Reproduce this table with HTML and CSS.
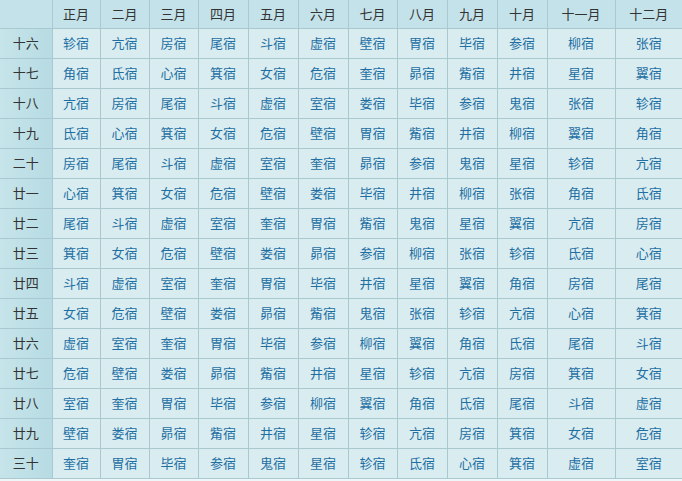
FILE: index.html
```html
<!DOCTYPE html>
<html lang="zh-CN">
<head>
<meta charset="utf-8">
<title>二十八宿</title>
<link rel="stylesheet" href="styles.css">
</head>
<body>
<table class="xiu">
<colgroup>
<col class="c-day"><col class="c48"><col class="c49"><col class="c49"><col class="c50"><col class="c50"><col class="c50"><col class="c49"><col class="c50"><col class="c50"><col class="c50"><col class="c68"><col class="c67">
</colgroup>
<thead>
<tr class="head"><th class="corner"></th><th>正月</th><th>二月</th><th>三月</th><th>四月</th><th>五月</th><th>六月</th><th>七月</th><th>八月</th><th>九月</th><th>十月</th><th>十一月</th><th>十二月</th></tr>
</thead>
<tbody>
<tr><th>十六</th><td>轸宿</td><td>亢宿</td><td>房宿</td><td>尾宿</td><td>斗宿</td><td>虚宿</td><td>壁宿</td><td>胃宿</td><td>毕宿</td><td>参宿</td><td>柳宿</td><td>张宿</td></tr>
<tr><th>十七</th><td>角宿</td><td>氐宿</td><td>心宿</td><td>箕宿</td><td>女宿</td><td>危宿</td><td>奎宿</td><td>昴宿</td><td>觜宿</td><td>井宿</td><td>星宿</td><td>翼宿</td></tr>
<tr><th>十八</th><td>亢宿</td><td>房宿</td><td>尾宿</td><td>斗宿</td><td>虚宿</td><td>室宿</td><td>娄宿</td><td>毕宿</td><td>参宿</td><td>鬼宿</td><td>张宿</td><td>轸宿</td></tr>
<tr><th>十九</th><td>氐宿</td><td>心宿</td><td>箕宿</td><td>女宿</td><td>危宿</td><td>壁宿</td><td>胃宿</td><td>觜宿</td><td>井宿</td><td>柳宿</td><td>翼宿</td><td>角宿</td></tr>
<tr><th>二十</th><td>房宿</td><td>尾宿</td><td>斗宿</td><td>虚宿</td><td>室宿</td><td>奎宿</td><td>昴宿</td><td>参宿</td><td>鬼宿</td><td>星宿</td><td>轸宿</td><td>亢宿</td></tr>
<tr><th>廿一</th><td>心宿</td><td>箕宿</td><td>女宿</td><td>危宿</td><td>壁宿</td><td>娄宿</td><td>毕宿</td><td>井宿</td><td>柳宿</td><td>张宿</td><td>角宿</td><td>氐宿</td></tr>
<tr><th>廿二</th><td>尾宿</td><td>斗宿</td><td>虚宿</td><td>室宿</td><td>奎宿</td><td>胃宿</td><td>觜宿</td><td>鬼宿</td><td>星宿</td><td>翼宿</td><td>亢宿</td><td>房宿</td></tr>
<tr><th>廿三</th><td>箕宿</td><td>女宿</td><td>危宿</td><td>壁宿</td><td>娄宿</td><td>昴宿</td><td>参宿</td><td>柳宿</td><td>张宿</td><td>轸宿</td><td>氐宿</td><td>心宿</td></tr>
<tr><th>廿四</th><td>斗宿</td><td>虚宿</td><td>室宿</td><td>奎宿</td><td>胃宿</td><td>毕宿</td><td>井宿</td><td>星宿</td><td>翼宿</td><td>角宿</td><td>房宿</td><td>尾宿</td></tr>
<tr><th>廿五</th><td>女宿</td><td>危宿</td><td>壁宿</td><td>娄宿</td><td>昴宿</td><td>觜宿</td><td>鬼宿</td><td>张宿</td><td>轸宿</td><td>亢宿</td><td>心宿</td><td>箕宿</td></tr>
<tr><th>廿六</th><td>虚宿</td><td>室宿</td><td>奎宿</td><td>胃宿</td><td>毕宿</td><td>参宿</td><td>柳宿</td><td>翼宿</td><td>角宿</td><td>氐宿</td><td>尾宿</td><td>斗宿</td></tr>
<tr><th>廿七</th><td>危宿</td><td>壁宿</td><td>娄宿</td><td>昴宿</td><td>觜宿</td><td>井宿</td><td>星宿</td><td>轸宿</td><td>亢宿</td><td>房宿</td><td>箕宿</td><td>女宿</td></tr>
<tr><th>廿八</th><td>室宿</td><td>奎宿</td><td>胃宿</td><td>毕宿</td><td>参宿</td><td>柳宿</td><td>翼宿</td><td>角宿</td><td>氐宿</td><td>尾宿</td><td>斗宿</td><td>虚宿</td></tr>
<tr><th>廿九</th><td>壁宿</td><td>娄宿</td><td>昴宿</td><td>觜宿</td><td>井宿</td><td>星宿</td><td>轸宿</td><td>亢宿</td><td>房宿</td><td>箕宿</td><td>女宿</td><td>危宿</td></tr>
<tr><th>三十</th><td>奎宿</td><td>胃宿</td><td>毕宿</td><td>参宿</td><td>鬼宿</td><td>星宿</td><td>轸宿</td><td>氐宿</td><td>心宿</td><td>箕宿</td><td>虚宿</td><td>室宿</td></tr>
</tbody>
</table>
</body>
</html>
```

FILE: styles.css
```css
html, body {
  margin: 0;
  padding: 0;
  background: #eef6f8;
}

.xiu {
  width: 682px;
  table-layout: fixed;
  border-collapse: collapse;
  font-family: "Noto Sans CJK SC", "Noto Sans", sans-serif;
  font-size: 13px;
  text-align: center;
}

.c-day { width: 52px; }
.c48 { width: 48px; }
.c49 { width: 49px; }
.c50 { width: 50px; }
.c68 { width: 68px; }
.c67 { width: 67px; }

.xiu th,
.xiu td {
  border: 1px solid #a9c8d0;
  padding: 0;
  line-height: 16px;
}

.xiu th {
  font-weight: normal;
  color: #333333;
  background: #c3e2e9;
}

.xiu tbody th {
  background: linear-gradient(to right, #c6e4ea, #b7dbe3);
}

.xiu td {
  color: #1f6fa3;
  background: #d9edf1;
}

.xiu .head {
  height: 28px;
}

.xiu tbody tr {
  height: 30px;
}

.xiu tr > :first-child {
  border-left: none;
}

.xiu tr > :last-child {
  border-right: none;
}

.xiu thead th {
  border-top: none;
}
```
